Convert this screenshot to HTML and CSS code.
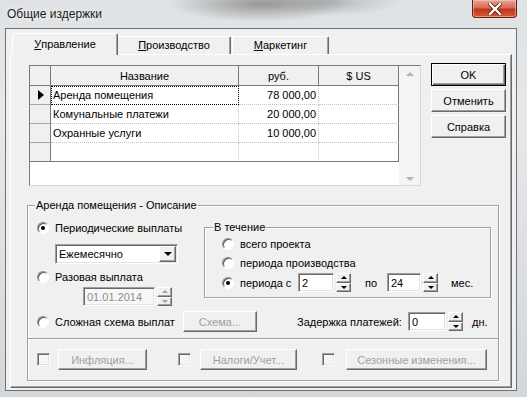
FILE: index.html
```html
<!DOCTYPE html>
<html>
<head>
  <meta charset="utf-8">
  <title>Общие издержки</title>
  <link rel="stylesheet" href="styles.css">
</head>
<body>
  <div class="window">
    <div class="titlebar">
      <span class="title">Общие издержки</span>
      <div class="close-btn">
        <svg width="14" height="12" viewBox="0 0 14 12">
          <path d="M2 1 L12 11 M12 1 L2 11" stroke="#5a1a10" stroke-width="4" stroke-linecap="square"/>
          <path d="M2 1 L12 11 M12 1 L2 11" stroke="#ffffff" stroke-width="2.4" stroke-linecap="square"/>
        </svg>
      </div>
    </div>

    <div class="client">
      <div class="tabs">
        <div class="tab tab-active"><u>У</u>правление</div>
        <div class="tab tab-2"><u>П</u>роизводство</div>
        <div class="tab tab-3"><u>М</u>аркетинг</div>
      </div>

      <div class="panel">
        <div class="panel-top">
          <div class="grid">
            <div class="grid-body">
              <div class="grid-table">
                <div class="gh gh-corner"></div>
                <div class="gh">Название</div>
                <div class="gh">руб.</div>
                <div class="gh gh-last">$ US</div>

                <div class="gi"><span class="row-mark"></span></div>
                <div class="gc gc-focus">Аренда помещения</div>
                <div class="gc num">78 000,00</div>
                <div class="gc gc-last"></div>

                <div class="gi"></div>
                <div class="gc">Комунальные платежи</div>
                <div class="gc num">20 000,00</div>
                <div class="gc gc-last"></div>

                <div class="gi"></div>
                <div class="gc">Охранные услуги</div>
                <div class="gc num">10 000,00</div>
                <div class="gc gc-last"></div>

                <div class="gi gi-end"></div>
                <div class="gc gc-end"></div>
                <div class="gc gc-end"></div>
                <div class="gc gc-last gc-end"></div>
              </div>
            </div>
            <div class="grid-scroll">
              <span class="arrow-up-sm"></span>
              <span class="arrow-down-sm"></span>
            </div>
          </div>

          <div class="side-buttons">
            <button class="btn btn-default">OK</button>
            <button class="btn">Отменить</button>
            <button class="btn">Справка</button>
          </div>
        </div>

        <div class="group">
          <span class="group-title">Аренда помещения - Описание</span>

          <div class="group-upper">
            <div class="left-col">
              <label class="radio"><span class="radio-dot checked"></span>Периодические выплаты</label>
              <div class="combo">
                <span class="combo-text">Ежемесячно</span>
                <span class="combo-btn"><span class="arrow-down"></span></span>
              </div>
              <label class="radio radio-once"><span class="radio-dot"></span>Разовая выплата</label>
              <div class="date-row">
                <div class="field field-date field-disabled">01.01.2014</div>
                <div class="spin spin-disabled">
                  <span class="spin-btn"><span class="arrow-up"></span></span>
                  <span class="spin-btn"><span class="arrow-down"></span></span>
                </div>
              </div>
            </div>

            <div class="subgroup">
              <span class="group-title sub-title">В течение</span>
              <label class="radio"><span class="radio-dot"></span>всего проекта</label>
              <label class="radio radio-mid"><span class="radio-dot"></span>периода производства</label>
              <div class="period-row">
                <label class="radio radio-period"><span class="radio-dot checked"></span>периода с</label>
                <div class="field field-from">2</div>
                <div class="spin">
                  <span class="spin-btn"><span class="arrow-up"></span></span>
                  <span class="spin-btn"><span class="arrow-down"></span></span>
                </div>
                <span class="lbl-to">по</span>
                <div class="field field-to">24</div>
                <div class="spin">
                  <span class="spin-btn"><span class="arrow-up"></span></span>
                  <span class="spin-btn"><span class="arrow-down"></span></span>
                </div>
                <span class="lbl-unit">мес.</span>
              </div>
            </div>
          </div>

          <div class="scheme-row">
            <label class="radio radio-scheme"><span class="radio-dot"></span>Сложная схема выплат</label>
            <button class="btn btn-disabled btn-scheme">Схема...</button>
            <span class="lbl-delay">Задержка платежей:</span>
            <div class="field field-delay">0</div>
            <div class="spin spin-delay">
              <span class="spin-btn"><span class="arrow-up"></span></span>
              <span class="spin-btn"><span class="arrow-down"></span></span>
            </div>
            <span class="lbl-days">дн.</span>
          </div>

          <div class="separator"></div>

          <div class="extras-row">
            <span class="check"></span>
            <button class="btn btn-disabled btn-infl">Инфляция...</button>
            <span class="check check-2"></span>
            <button class="btn btn-disabled btn-tax">Налоги/Учет...</button>
            <span class="check check-3"></span>
            <button class="btn btn-disabled btn-season">Сезонные изменения...</button>
          </div>
        </div>
      </div>
    </div>
  </div>
</body>
</html>
```

FILE: styles.css
```css
/* Base */
* {
  margin: 0;
  padding: 0;
  box-sizing: border-box;
}

body {
  width: 527px;
  height: 397px;
  overflow: hidden;
  font-family: "Liberation Sans", Arial, sans-serif;
  font-size: 11px;
  color: #000000;
  background-color: #d8dcdf;
}

/* Window frame (glass) */
.window {
  width: 527px;
  height: 397px;
  background:
    radial-gradient(ellipse 90px 18px at 260px 4px, rgba(90, 90, 90, 0.55), rgba(90, 90, 90, 0) 100%),
    radial-gradient(ellipse 70px 14px at 330px 2px, rgba(120, 120, 120, 0.4), rgba(120, 120, 120, 0) 100%),
    linear-gradient(180deg, #dfe2e4 0%, #e6e8ea 30%, #d4d7da 100%);
}

.titlebar {
  height: 28px;
  display: flex;
  align-items: flex-start;
  justify-content: space-between;
}

.title {
  font-size: 12px;
  color: #1b1b1b;
  margin: 7px 0 0 7px;
  text-shadow: 0 0 6px rgba(255, 255, 255, 0.9);
}

.close-btn {
  width: 45px;
  height: 18px;
  margin-right: 10px;
  display: flex;
  align-items: center;
  justify-content: center;
  border: 1px solid #6b1d12;
  border-top: none;
  border-radius: 0 0 4px 4px;
  background: linear-gradient(180deg, #e8a493 0%, #d66c55 45%, #c2341c 55%, #d8593a 100%);
  box-shadow: inset 0 0 0 1px rgba(255, 210, 200, 0.5);
}

/* Client area */
.client {
  width: 512px;
  height: 363px;
  margin-left: 5px;
  border: 1px solid #6e7276;
  background-color: #f0f0f0;
  padding: 4px 4px 0 4px;
}

/* Tabs */
.tabs {
  display: flex;
  height: 21px;
  margin-left: 2px;
  position: relative;
  z-index: 1;
}

.tab {
  height: 18px;
  margin-top: 3px;
  display: flex;
  align-items: center;
  justify-content: center;
  border-top: 1px solid #ffffff;
  border-left: 1px solid #ffffff;
  border-right: 1px solid #696969;
  border-radius: 2px 2px 0 0;
  box-shadow: inset -1px 0 #a0a0a0;
  background-color: #f0f0f0;
  padding-bottom: 1px;
}

.tab u {
  text-decoration: underline;
  text-underline-offset: 1px;
}

.tab-active {
  width: 106px;
  height: 22px;
  margin-top: 0;
  padding-bottom: 2px;
}

.tab-2 {
  width: 113px;
  border-left: none;
}

.tab-3 {
  width: 97px;
  margin-left: 1px;
}

/* Tab page */
.panel {
  width: 502px;
  height: 334px;
  border-top: 1px solid #ffffff;
  border-left: 1px solid #ffffff;
  border-right: 1px solid #696969;
  border-bottom: 1px solid #696969;
  box-shadow: inset -1px -1px #a0a0a0;
  padding: 10px 0 0 16px;
}

.panel-top {
  display: flex;
  align-items: flex-start;
}

/* Data grid */
.grid {
  width: 392px;
  height: 121px;
  margin-left: 2px;
  display: flex;
  border: 1px solid #7a7a7a;
  border-right-color: #d8d8d8;
  border-bottom-color: #d8d8d8;
  background-color: #ffffff;
}

.grid-body {
  width: 369px;
}

.grid-table {
  display: grid;
  grid-template-columns: 21px 188px 80px 80px;
  grid-template-rows: 20px 19px 19px 19px 19px;
}

.gh {
  background-color: #f0f0f0;
  border-right: 1px solid #7a7a7a;
  border-bottom: 1px solid #7a7a7a;
  display: flex;
  align-items: center;
  justify-content: center;
}

.gh-corner {
  background-color: #f0f0f0;
}

.gi {
  background-color: #f0f0f0;
  border-right: 1px solid #7a7a7a;
  border-bottom: 1px solid #a8a8a8;
  display: flex;
  align-items: center;
  justify-content: center;
}

.gi-end {
  border-bottom-color: #7a7a7a;
}

.row-mark {
  width: 0;
  height: 0;
  border-top: 5px solid transparent;
  border-bottom: 5px solid transparent;
  border-left: 6px solid #000000;
  margin-left: 2px;
}

.gc {
  border-right: 1px dotted #c4c4c4;
  border-bottom: 1px dotted #c4c4c4;
  padding: 0 2px;
  display: flex;
  align-items: center;
  white-space: nowrap;
}

.gc.num {
  justify-content: flex-end;
}

.gc-last {
  border-right: 1px solid #7a7a7a;
}

.gc-end {
  border-bottom: 1px solid #7a7a7a;
}

.gc-focus {
  outline: 1px dotted #000000;
  outline-offset: -1px;
}

.grid-scroll {
  width: 21px;
  display: flex;
  flex-direction: column;
  justify-content: space-between;
  align-items: center;
  padding: 6px 0 4px 0;
  background-color: #f4f4f4;
}

.arrow-up-sm {
  width: 0;
  height: 0;
  border-left: 4px solid transparent;
  border-right: 4px solid transparent;
  border-bottom: 4px solid #b4b4b4;
}

.arrow-down-sm {
  width: 0;
  height: 0;
  border-left: 4px solid transparent;
  border-right: 4px solid transparent;
  border-top: 4px solid #b4b4b4;
}

/* Buttons */
.btn {
  display: flex;
  align-items: center;
  justify-content: center;
  height: 21px;
  font-family: inherit;
  font-size: 11px;
  color: #000000;
  background-color: #f0f0f0;
  border: 1px solid;
  border-color: #ffffff #696969 #696969 #ffffff;
  box-shadow: inset -1px -1px #a0a0a0;
}

.side-buttons {
  display: flex;
  flex-direction: column;
  gap: 3px;
  margin: -2px 0 0 10px;
}

.side-buttons .btn {
  width: 75px;
  height: 23px;
}

.btn-default {
  border: 1px solid #000000;
  box-shadow: inset 1px 1px #ffffff, inset -1px -1px #696969, inset -2px -2px #a0a0a0;
}

.btn-disabled {
  color: #a0a0a0;
}

/* Group boxes */
.group {
  position: relative;
  width: 472px;
  height: 176px;
  margin-top: 19px;
  border: 1px solid #a0a0a0;
  box-shadow: inset 1px 1px #ffffff, 1px 1px #ffffff;
}

.group-title {
  position: absolute;
  top: -7px;
  left: 7px;
  padding: 0 1px;
  line-height: 13px;
  background-color: #f0f0f0;
}

.group-upper {
  display: flex;
  height: 100px;
  padding-left: 9px;
}

.left-col {
  width: 167px;
  padding-top: 14px;
  display: flex;
  flex-direction: column;
}

.radio {
  display: flex;
  align-items: center;
  height: 16px;
  white-space: nowrap;
}

.radio-dot {
  position: relative;
  width: 12px;
  height: 12px;
  margin-right: 6px;
  border-radius: 50%;
  border: 1px solid;
  border-color: #8a8a8a #ffffff #ffffff #8a8a8a;
  background-color: #ffffff;
  box-shadow: inset 1px 1px #5a5a5a;
  flex: none;
}

.radio-dot.checked::after {
  content: '';
  position: absolute;
  top: 3px;
  left: 3px;
  width: 4px;
  height: 4px;
  border-radius: 50%;
  background-color: #000000;
}

.combo {
  display: flex;
  align-items: center;
  width: 123px;
  height: 20px;
  margin: 8px 0 0 18px;
  background-color: #ffffff;
  border: 1px solid;
  border-color: #a0a0a0 #ffffff #ffffff #a0a0a0;
  box-shadow: inset 1px 1px #696969, inset -1px -1px #e3e3e3;
}

.combo-text {
  flex: 1;
  padding-left: 3px;
}

.combo-btn {
  width: 17px;
  height: 16px;
  margin-right: 1px;
  display: flex;
  align-items: center;
  justify-content: center;
  background-color: #f0f0f0;
  border: 1px solid;
  border-color: #ffffff #696969 #696969 #ffffff;
  box-shadow: inset -1px -1px #a0a0a0;
}

.radio-once {
  margin-top: 5px;
}

.date-row {
  display: flex;
  margin: 2px 0 0 46px;
}

/* Inputs and spinners */
.field {
  height: 19px;
  padding: 0 3px;
  display: flex;
  align-items: center;
  background-color: #ffffff;
  border: 1px solid;
  border-color: #a0a0a0 #ffffff #ffffff #a0a0a0;
  box-shadow: inset 1px 1px #696969, inset -1px -1px #e3e3e3;
}

.field-disabled {
  color: #8d8d8d;
  background-color: #f7f7f7;
}

.field-date {
  width: 72px;
}

.spin {
  width: 15px;
  height: 19px;
  margin-left: 2px;
  display: flex;
  flex-direction: column;
}

.spin-btn {
  flex: 1;
  display: flex;
  align-items: center;
  justify-content: center;
  background-color: #f0f0f0;
  border: 1px solid;
  border-color: #ffffff #696969 #696969 #ffffff;
  box-shadow: inset -1px -1px #a0a0a0;
}

.arrow-up {
  width: 0;
  height: 0;
  border-left: 3px solid transparent;
  border-right: 3px solid transparent;
  border-bottom: 3px solid #000000;
}

.arrow-down {
  width: 0;
  height: 0;
  border-left: 3px solid transparent;
  border-right: 3px solid transparent;
  border-top: 3px solid #000000;
}

.combo-btn .arrow-down {
  border-left-width: 4px;
  border-right-width: 4px;
  border-top-width: 4px;
}

.spin-disabled .arrow-up {
  border-bottom-color: #a0a0a0;
}

.spin-disabled .arrow-down {
  border-top-color: #a0a0a0;
}

/* "В течение" box */
.subgroup {
  position: relative;
  width: 287px;
  height: 71px;
  margin-top: 21px;
  padding: 8px 0 0 17px;
  border: 1px solid #a0a0a0;
  box-shadow: inset 1px 1px #ffffff, 1px 1px #ffffff;
}

.sub-title {
  left: 8px;
}

.radio-mid {
  margin-top: 3px;
}

.period-row {
  display: flex;
  align-items: center;
  height: 19px;
  margin-top: 2px;
}

.radio-period {
  width: 76px;
}

.field-from {
  width: 36px;
}

.lbl-to {
  width: 22px;
  margin-left: 14px;
}

.field-to {
  width: 34px;
}

.lbl-unit {
  margin-left: 13px;
}

/* Scheme row */
.scheme-row {
  display: flex;
  align-items: center;
  height: 21px;
  margin-top: 5px;
  padding-left: 9px;
}

.radio-scheme {
  width: 146px;
}

.btn-scheme {
  width: 74px;
}

.lbl-delay {
  width: 111px;
  margin-left: 40px;
}

.field-delay {
  width: 38px;
}

.lbl-days {
  margin-left: 9px;
}

.separator {
  height: 2px;
  margin-top: 6px;
  border-top: 1px solid #a0a0a0;
  border-bottom: 1px solid #ffffff;
}

/* Extras row */
.extras-row {
  display: flex;
  align-items: center;
  height: 21px;
  margin-top: 9px;
  padding-left: 9px;
}

.check {
  width: 13px;
  height: 13px;
  margin-right: 8px;
  background-color: #f6f6f6;
  border: 1px solid;
  border-color: #a0a0a0 #ffffff #ffffff #a0a0a0;
  box-shadow: inset 1px 1px #696969, inset -1px -1px #e3e3e3;
}

.check-2 {
  margin-left: 31px;
  margin-right: 9px;
}

.check-3 {
  margin-left: 25px;
  margin-right: 11px;
}

.btn-infl {
  width: 89px;
}

.btn-tax {
  width: 97px;
}

.btn-season {
  width: 141px;
}
```
